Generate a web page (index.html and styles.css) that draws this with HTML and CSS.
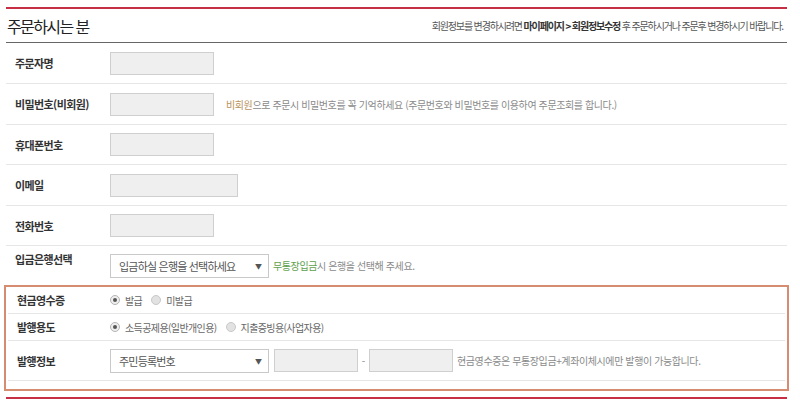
FILE: index.html
```html
<!DOCTYPE html>
<html lang="ko">
<head>
<meta charset="utf-8">
<title>주문하시는 분</title>
<link rel="stylesheet" href="styles.css">
</head>
<body>
<div class="wrap">
  <div class="head">
    <h2 class="title">주문하시는 분</h2>
    <p class="notice">회원정보를 변경하시려면 <b>마이페이지 &gt; 회원정보수정</b> 후 주문하시거나 주문후 변경하시기 바랍니다.</p>
  </div>

  <div class="row r41">
    <div class="label">주문자명</div>
    <div class="field"><span class="inp"></span></div>
  </div>
  <div class="row r41">
    <div class="label">비밀번호(비회원)</div>
    <div class="field"><span class="inp"></span><span class="hint"><em class="tan">비회원</em>으로 주문시 비밀번호를 꼭 기억하세요 (주문번호와 비밀번호를 이용하여 주문조회를 합니다.)</span></div>
  </div>
  <div class="row">
    <div class="label">휴대폰번호</div>
    <div class="field"><span class="inp"></span></div>
  </div>
  <div class="row r41">
    <div class="label">이메일</div>
    <div class="field"><span class="inp wide"></span></div>
  </div>
  <div class="row">
    <div class="label">전화번호</div>
    <div class="field"><span class="inp"></span></div>
  </div>
  <div class="row last">
    <div class="label top">입금은행선택</div>
    <div class="field"><span class="sel">입금하실 은행을 선택하세요<i class="arrow">▼</i></span><span class="hint near"><em class="green">무통장입금</em>시 은행을 선택해 주세요.</span></div>
  </div>

  <div class="receipt">
    <div class="row short">
      <div class="label">현금영수증</div>
      <div class="field">
        <span class="radio on"></span><span class="opt">발급</span>
        <span class="radio"></span><span class="opt">미발급</span>
      </div>
    </div>
    <div class="row short">
      <div class="label">발행용도</div>
      <div class="field">
        <span class="radio on"></span><span class="opt">소득공제용(일반개인용)</span>
        <span class="radio"></span><span class="opt">지출증빙용(사업자용)</span>
      </div>
    </div>
    <div class="row">
      <div class="label">발행정보</div>
      <div class="field"><span class="sel">주민등록번호<i class="arrow">▼</i></span><span class="inp mid"></span><span class="dash">-</span><span class="inp mid"></span><span class="hint close">현금영수증은 무통장입금+계좌이체시에만 발행이 가능합니다.</span></div>
    </div>
  </div>
  <div class="redline"></div>
</div>
</body>
</html>
```

FILE: styles.css
```css
* { box-sizing: border-box; }
html, body { margin: 0; padding: 0; background: #fff; }
body { font-family: "Noto Sans CJK KR", "Noto Sans", sans-serif; color: #333; }

.wrap {
  margin: 7px 0 0 6px;
  width: 781px;
  border-top: 2px solid #c72f44;
}

.head {
  display: flex;
  align-items: center;
  justify-content: space-between;
  height: 34px;
  border-bottom: 1px solid #666;
}
.title {
  margin: 0 0 0 1px;
  font-size: 16px;
  font-weight: 400;
  letter-spacing: -1.6px;
  color: #222;
}
.notice {
  margin: 0 4px 0 0;
  font-size: 10px;
  letter-spacing: -1.15px;
  color: #555;
}
.notice b { color: #333; font-weight: 700; }

.row {
  display: flex;
  align-items: center;
  height: 40px;
  border-bottom: 1px solid #e6e6e6;
}
.row.r41 { height: 41px; }
.row.last { border-bottom: 0; height: 39px; }
.row.short { height: 27px; }

.label {
  width: 104px;
  padding-left: 9px;
  font-size: 11px;
  font-weight: 700;
  letter-spacing: -0.6px;
  color: #333;
}
.label.top { align-self: flex-start; padding-top: 5px; }

.field {
  display: flex;
  align-items: center;
  flex: 1;
}

.inp {
  display: block;
  width: 104px;
  height: 23px;
  background: #efefef;
  border: 1px solid #cfcfcf;
}
.inp.wide { width: 128px; }
.inp.mid { width: 84px; }

.hint {
  margin-left: 12px;
  font-size: 10px;
  letter-spacing: -0.4px;
  color: #8a8a8a;
}
.hint.near { margin-left: 4px; }
.hint.close { margin-left: 4px; }
.hint em { font-style: normal; }
.tan { color: #b8935c; }
.green { color: #5fa24d; }

.sel {
  position: relative;
  display: flex;
  align-items: center;
  width: 159px;
  height: 24px;
  padding-left: 8px;
  background: #fff;
  border: 1px solid #c9c9c9;
  font-size: 11px;
  letter-spacing: -0.8px;
  color: #555;
}
.arrow {
  position: absolute;
  right: 6px;
  top: 7px;
  font-style: normal;
  font-size: 7px;
  line-height: 8px;
  letter-spacing: 0;
  color: #555;
}

.dash {
  width: 11px;
  text-align: center;
  font-size: 10px;
  color: #888;
}
.sel + .inp { margin-left: 5px; }

.radio {
  display: inline-block;
  width: 10px;
  height: 10px;
  border-radius: 50%;
  background: #e2e2e2;
  border: 1px solid #c8c8c8;
  position: relative;
}
.radio.on { background: #eee; border-color: #b5b5b5; }
.radio.on::after {
  content: "";
  position: absolute;
  left: 2px;
  top: 2px;
  width: 4px;
  height: 4px;
  border-radius: 50%;
  background: #555;
}
.opt {
  margin: 0 9px 0 5px;
  font-size: 10px;
  letter-spacing: -0.6px;
  color: #666;
}

.receipt {
  margin: 0 -2px;
  border: 2px solid #d58c71;
  padding: 0 0 8px 2px;
}
.receipt .row { margin-right: 2px; }
.receipt .label { width: 102px; }

.redline {
  margin-top: 6px;
  height: 2px;
  background: #c72f44;
}
```
